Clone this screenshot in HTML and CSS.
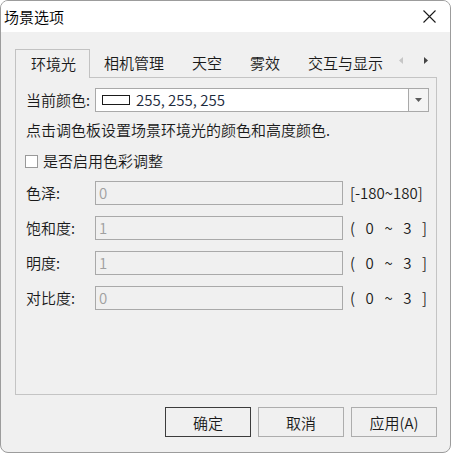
FILE: index.html
```html
<!DOCTYPE html>
<html lang="zh-CN">

<head>
    <meta charset="utf-8">
    <link rel="stylesheet" href="styles.css">
</head>

<body>
    <div class="window">
        <div class="titlebar">
            <span class="titlebar__title">场景选项</span>
            <svg class="titlebar__close" width="13" height="13" viewBox="0 0 13 13">
                <path d="M0.5 0.5 L12.5 12.5 M12.5 0.5 L0.5 12.5" stroke="#1a1a1a" stroke-width="1.1" fill="none" />
            </svg>
        </div>

        <div class="dialog">
            <div class="tabs">
                <div class="tab tab--active">环境光</div>
                <div class="tab">相机管理</div>
                <div class="tab">天空</div>
                <div class="tab">雾效</div>
                <div class="tab">交互与显示</div>
                <div class="tabs__scroll">
                    <svg class="tabs__arrow" width="4" height="7" viewBox="0 0 4 7">
                        <path d="M4 0 L0 3.5 L4 7 Z" fill="#c6c6c6" />
                    </svg>
                    <svg class="tabs__arrow tabs__arrow--next" width="4" height="7" viewBox="0 0 4 7">
                        <path d="M0 0 L4 3.5 L0 7 Z" fill="#444" />
                    </svg>
                </div>
            </div>

            <div class="panel">
                <div class="row">
                    <span class="row__label">当前颜色:</span>
                    <div class="combo">
                        <span class="combo__swatch"></span>
                        <span class="combo__value">255, 255, 255</span>
                        <span class="combo__button">
                            <svg width="7" height="4" viewBox="0 0 7 4">
                                <path d="M0 0 L7 0 L3.5 4 Z" fill="#5a5a5a" />
                            </svg>
                        </span>
                    </div>
                </div>

                <p class="hint">点击调色板设置场景环境光的颜色和高度颜色.</p>

                <label class="check">
                    <span class="check__box"></span>
                    是否启用色彩调整
                </label>

                <div class="fields">
                    <div class="row">
                        <span class="row__label">色泽:</span>
                        <div class="field">0</div>
                        <span class="range">[-180~180]</span>
                    </div>
                    <div class="row">
                        <span class="row__label">饱和度:</span>
                        <div class="field">1</div>
                        <span class="range range--spread"><span>(</span><span>0</span><span>~</span><span>3</span><span>]</span></span>
                    </div>
                    <div class="row">
                        <span class="row__label">明度:</span>
                        <div class="field">1</div>
                        <span class="range range--spread"><span>(</span><span>0</span><span>~</span><span>3</span><span>]</span></span>
                    </div>
                    <div class="row">
                        <span class="row__label">对比度:</span>
                        <div class="field">0</div>
                        <span class="range range--spread"><span>(</span><span>0</span><span>~</span><span>3</span><span>]</span></span>
                    </div>
                </div>
            </div>

            <div class="buttons">
                <button class="btn btn--default">确定</button>
                <button class="btn">取消</button>
                <button class="btn">应用(A)</button>
            </div>
        </div>
    </div>
</body>

</html>
```

FILE: styles.css
```css
*,
*::after,
*::before {
    box-sizing: border-box;
}

body {
    margin: 0;
    background: #fff;
    font-family: "Noto Sans CJK SC", "Noto Sans", sans-serif;
    font-size: 15px;
    font-weight: 350;
    color: #1a1a1a;
}

.window {
    width: 451px;
    height: 453px;
    border: 1px solid #9c9c9c;
    border-radius: 8px;
    overflow: hidden;
    display: flex;
    flex-direction: column;
    background: #f0f0f0;
}

/* title bar */
.titlebar {
    height: 31px;
    background: #fff;
    display: flex;
    align-items: center;
    padding: 0 14px 0 3px;
}

.titlebar__title {
    line-height: 20px;
    color: #000;
}

.titlebar__close {
    margin-left: auto;
    margin-top: -1px;
}

/* dialog body */
.dialog {
    flex: 1;
    display: flex;
    flex-direction: column;
    padding: 17px 13px 15px 14px;
}

.tabs {
    height: 28px;
    display: flex;
    align-items: flex-start;
}

.tab {
    height: 28px;
    padding: 0 14px;
    display: flex;
    align-items: center;
    white-space: nowrap;
    line-height: 20px;
    color: #1a1a1a;
}

.tab--active {
    position: relative;
    z-index: 1;
    width: 75px;
    height: 29px;
    margin-bottom: -1px;
    padding: 0 0 1px 15px;
    border: 1px solid #c2c2c2;
    border-bottom: none;
    background: #f0f0f0;
}

.tabs__scroll {
    display: flex;
    align-items: center;
    height: 28px;
    padding-left: 2px;
    margin-top: -3px;
}

.tabs__arrow--next {
    margin-left: 21px;
}

.panel {
    height: 318px;
    border: 1px solid #c4c4c4;
    padding: 10px 7px 0 10px;
    display: flex;
    flex-direction: column;
}

.row {
    display: flex;
    align-items: center;
    height: 24px;
}

.row__label {
    width: 69px;
    flex: none;
    line-height: 20px;
    color: #1a1a1a;
}

/* colour combo */
.combo {
    flex: 1;
    height: 24px;
    border: 1px solid #a9a9a9;
    background: #fff;
    display: flex;
    align-items: center;
    padding-left: 6px;
}

.combo__swatch {
    width: 28px;
    height: 10px;
    border: 1px solid #1a1a1a;
    background: #fff;
    flex: none;
}

.combo__value {
    margin-left: 6px;
    line-height: 20px;
    color: #1c2a3c;
}

.combo__button {
    margin-left: auto;
    width: 20px;
    height: 100%;
    border-left: 1px solid #a9a9a9;
    background: #f4f4f4;
    display: flex;
    align-items: center;
    justify-content: center;
}

.hint {
    margin: 8px 0 0;
    line-height: 20px;
}

.check {
    margin-top: 11px;
    height: 20px;
    display: flex;
    align-items: center;
    gap: 5px;
    line-height: 20px;
}

.check__box {
    width: 13px;
    height: 13px;
    margin-left: -1px;
    border: 1px solid #999;
    background: #fff;
}

.fields {
    margin-top: 10px;
    display: flex;
    flex-direction: column;
    gap: 11px;
}

.field {
    width: 248px;
    height: 24px;
    flex: none;
    border: 1px solid #a9a9a9;
    padding: 0 3px;
    line-height: 22px;
    color: #a0a0a0;
}

.range {
    margin-left: 7px;
    width: 78px;
    line-height: 20px;
    white-space: nowrap;
    color: #1a1a1a;
}

.range--spread {
    display: flex;
    justify-content: space-between;
    padding-right: 1px;
}

/* buttons */
.buttons {
    margin-top: 12px;
    display: flex;
    justify-content: flex-end;
    gap: 7px;
}

.btn {
    width: 86px;
    height: 30px;
    border: 1px solid #adadad;
    background: #f0f0f0;
    font-family: inherit;
    font-size: 15px;
    font-weight: 350;
    color: #1a1a1a;
    padding: 0;
}

.btn--default {
    border-color: #3c3c3c;
}
```
